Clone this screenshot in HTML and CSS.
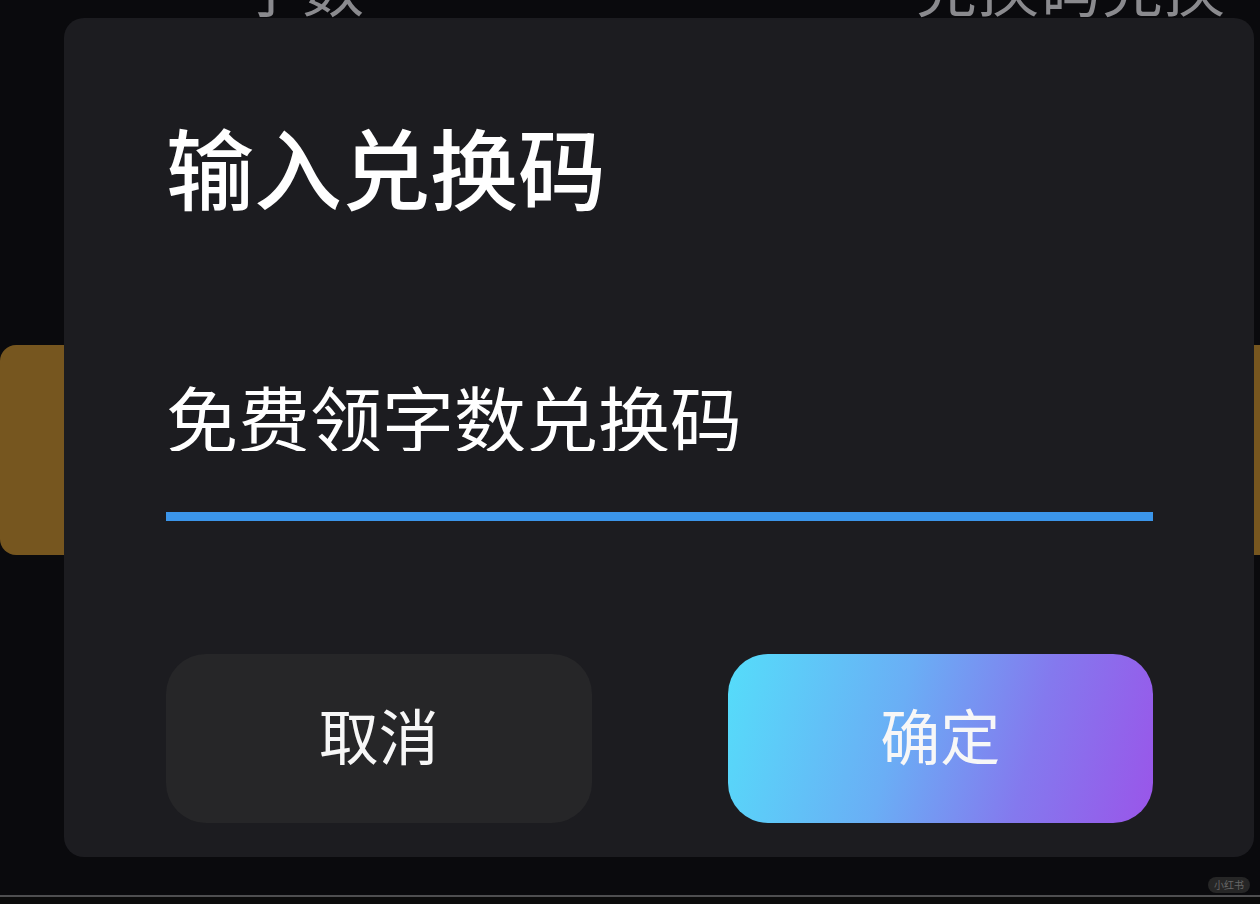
FILE: index.html
```html
<!DOCTYPE html>
<html lang="zh-CN">
<head>
    <meta charset="UTF-8">
    <meta name="viewport" content="width=device-width, initial-scale=1.0">
    <title>输入兑换码</title>
    <link rel="stylesheet" href="styles.css">
</head>
<body>
    <div class="screen">
        <!-- page behind the dialog -->
        <div class="page">
            <div class="page-head">
                <span class="head-label">字数</span>
                <span class="head-label">兑换码兑换</span>
            </div>
            <div class="gold-card"></div>
        </div>
        <div class="bottom-bar"></div>

        <!-- Redeem code dialog -->
        <div class="dialog">
            <h1 class="dialog-title">输入兑换码</h1>
            <div class="code-field">
                <input type="text" class="code-input" value="免费领字数兑换码">
            </div>
            <div class="dialog-actions">
                <button class="btn btn-cancel">取消</button>
                <button class="btn btn-confirm">确定</button>
            </div>
        </div>

        <div class="watermark">小红书</div>
    </div>
</body>
</html>
```

FILE: styles.css
```css
* {
    box-sizing: border-box;
}

body {
    margin: 0;
    padding: 0;
    background-color: #0a0a0d;
    font-family: "Noto Sans CJK SC", "Noto Sans", sans-serif;
    color: #ffffff;
}

.screen {
    position: relative;
    width: 1260px;
    height: 904px;
    overflow: hidden;
    background-color: #0a0a0d;
}

.page {
    display: flex;
    flex-direction: column;
    height: 895px;
}

.page-head {
    display: flex;
    justify-content: space-between;
    padding: 0 35px 0 240px;
    margin-top: -46px;
}

.head-label {
    font-size: 62px;
    line-height: 62px;
    color: #8a8a8e;
}

.gold-card {
    margin-top: 329px;
    margin-right: -30px;
    height: 210px;
    background-color: #76561f;
    border-radius: 16px;
}

.bottom-bar {
    height: 9px;
    border-top: 2px solid #4e4e50;
    background-color: #0b0b0b;
}

.dialog {
    position: absolute;
    left: 64px;
    top: 18px;
    width: 1190px;
    height: 839px;
    padding: 103px 101px 34px 102px;
    background-color: #1c1c20;
    border-radius: 20px;
    display: flex;
    flex-direction: column;
}

.dialog-title {
    margin: 0;
    font-size: 88px;
    line-height: 88px;
    font-weight: 500;
    color: #ffffff;
}

.code-field {
    margin-top: 170px;
    border-bottom: 9px solid #3b95ea;
    padding-bottom: 61px;
}

.code-input {
    display: block;
    width: 100%;
    margin: 0;
    padding: 0;
    border: none;
    outline: none;
    background: transparent;
    font-family: inherit;
    font-size: 72px;
    line-height: 72px;
    height: 72px;
    color: #ffffff;
}

.dialog-actions {
    display: flex;
    gap: 136px;
    margin-top: auto;
}

.btn {
    flex: 1;
    height: 169px;
    padding: 0 0 10px;
    border: none;
    border-radius: 40px;
    font-family: inherit;
    font-size: 60px;
    font-weight: 400;
    color: #f7f7f7;
    cursor: pointer;
}

.btn-cancel {
    background-color: #262628;
}

.btn-confirm {
    background: linear-gradient(105deg, #55ddfa 0%, #6aaef5 40%, #8479ee 70%, #9a55e9 100%);
}

.watermark {
    position: absolute;
    right: 10px;
    bottom: 11px;
    padding: 1px 6px;
    border-radius: 9px;
    background-color: #262626;
    font-size: 10px;
    line-height: 14px;
    color: #666666;
}
```
